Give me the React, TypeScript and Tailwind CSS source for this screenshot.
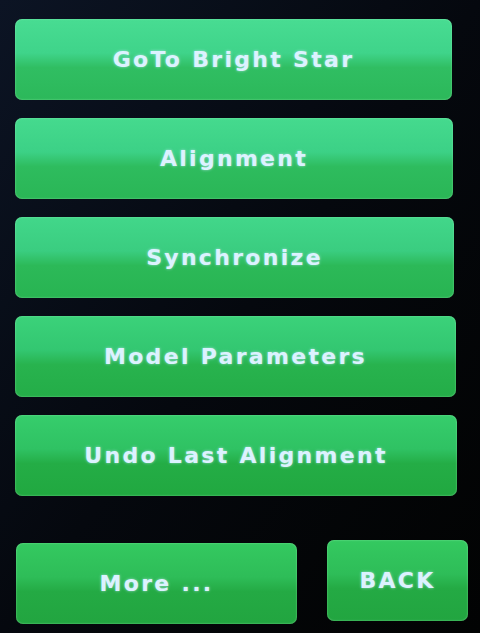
const items = [
    { label: 'GoTo Bright Star', mr: 'mr-[28px]', tone: 'bg-[linear-gradient(180deg,#48dc92_0%,#3fd48a_42%,#30be62_60%,#2cb85a_100%)]' },
    { label: 'Alignment', mr: 'mr-[27px]', tone: 'bg-[linear-gradient(180deg,#45da8e_0%,#3cd186_42%,#2ebc5e_60%,#2ab656_100%)]' },
    { label: 'Synchronize', mr: 'mr-[26px]', tone: 'bg-[linear-gradient(180deg,#42d78a_0%,#3acd80_42%,#2cb958_60%,#28b452_100%)]' },
    { label: 'Model Parameters', mr: 'mr-[24px]', tone: 'bg-[linear-gradient(180deg,#3bd27a_0%,#33c771_42%,#28b34e_60%,#24ad48_100%)]' },
    { label: 'Undo Last Alignment', mr: 'mr-[23px]', tone: 'bg-[linear-gradient(180deg,#36cd6c_0%,#2fc263_42%,#24ad46_60%,#21a840_100%)]' },
];

const bottomTone = 'bg-[linear-gradient(180deg,#34c960_0%,#2ebd58_42%,#24aa44_60%,#22a540_100%)]';

const labelClass =
    "font-['DejaVu_Sans',sans-serif] font-bold text-[22px] tracking-[2.3px] text-[#dcf2ff] [text-shadow:0_0_3px_rgba(200,235,255,0.7)]";

const PanelButton = ({ label, className }: { label: string; className: string }) => (
    <div
        className={`flex items-center justify-center h-[81px] rounded-[7px] shadow-[inset_0_0_2px_rgba(180,255,200,0.6)] ${className}`}
    >
        <span className={labelClass}>{label}</span>
    </div>
);

export default function App() {
    return (
        <div className="w-[480px] h-[633px] overflow-hidden bg-gradient-to-br from-[#0c1424] via-[#05080e] to-[#020303] flex flex-col pt-[19px] pl-[15px]">
            <div className="flex flex-col gap-[18px]">
                {items.map((it) => (
                    <PanelButton key={it.label} label={it.label} className={`${it.mr} ${it.tone}`} />
                ))}
            </div>

            {/* bottom row */}
            <div className="flex gap-[30px] mt-[47px] pl-px">
                <PanelButton label="More ..." className={`w-[281px] ${bottomTone}`} />
                <PanelButton label="BACK" className={`w-[141px] -mt-[3px] ${bottomTone}`} />
            </div>
        </div>
    );
}
